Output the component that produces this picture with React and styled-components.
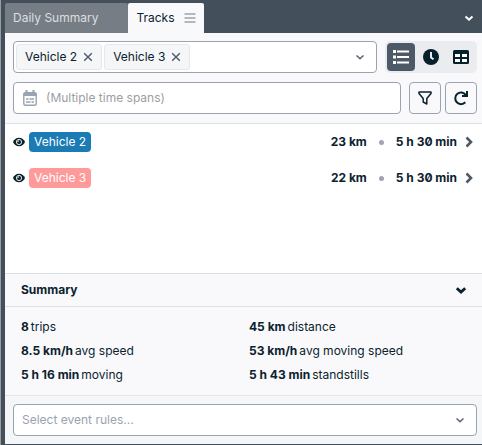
import React from 'react';
import styled, { createGlobalStyle } from 'styled-components';

const GlobalStyle = createGlobalStyle`
    *, *::before, *::after {
        box-sizing: border-box;
    }

    html, body, #root {
        height: 100%;
    }

    body {
        margin: 0;
        background-color: #444f5c;
        color: #0b222d;
        font-family: Inter, "Liberation Sans", sans-serif;
        font-size: 12px;
        line-height: 20px;
    }

    button, input {
        margin: 0;
        font: inherit;
        color: inherit;
    }

    svg {
        display: block;
        flex: none;
    }
`;

const Panel = styled.div`
    display: flex;
    flex-direction: column;
    min-height: 100%;
    border-left: 1px solid #9a9c9d;
    padding: 3px 0 1px 4px;
    background-color: #444f5c;
`;

const TabBar = styled.div`
    display: flex;
    height: 30px;
    padding-right: 8px;
`;

const Tab = styled.button`
    display: flex;
    align-items: center;
    gap: 9px;
    border: 0;
    border-radius: 2px 2px 0 0;
    padding: 0 ${({ $active }) => ($active ? '8px' : '30px')} 0 8px;
    background-color: ${({ $active }) => ($active ? '#f9f9fc' : '#777d85')};
    color: ${({ $active }) => ($active ? '#0b222d' : '#dcdfe2')};
    white-space: nowrap;
`;

const IconButton = styled.button`
    display: flex;
    align-items: center;
    justify-content: center;
    border: 0;
    padding: 0;
    background: none;
    color: ${({ $color }) => $color || '#0b222d'};
`;

const TabMenu = styled(IconButton)`
    margin-left: auto;
`;

const Filters = styled.div`
    display: flex;
    flex-direction: column;
    gap: 9px;
    border-bottom: 1px solid #dcdfe6;
    padding: 8px 5px 9px 8px;
    background-color: #f9f9fc;
`;

const FilterRow = styled.div`
    display: flex;
    gap: 8px;
`;

const Field = styled.div`
    display: flex;
    align-items: center;
    flex: 1;
    min-width: 0;
    height: 32px;
    border: 1px solid #9aa3b2;
    border-radius: 4px;
    padding: 0 11px 0 ${({ $tags }) => ($tags ? '2px' : '8px')};
    background-color: #fff;

    input {
        flex: 1;
        min-width: 0;
        border: 0;
        padding: 0;
        outline: 0;
        background: none;
    }

    input::placeholder {
        color: ${({ $muted }) => ($muted ? '#9aa3b2' : '#9c9ea2')};
        opacity: 1;
    }
`;

const Tag = styled.span`
    display: flex;
    align-items: center;
    gap: 6px;
    height: 26px;
    margin-right: 2px;
    border: 1px solid #e6e8ec;
    border-radius: 3px;
    padding: 0 8px;
    background-color: #f5f6f8;
    white-space: nowrap;
`;

const ViewSwitch = styled.div`
    display: flex;
    align-items: center;
    gap: 2px;
    border-radius: 5px;
    padding: 2px;
    background-color: #ebecf0;
`;

const ViewButton = styled(IconButton)`
    width: 28px;
    height: 28px;
    border-radius: 4px;
    background-color: ${({ $active }) => ($active ? '#4e5968' : 'transparent')};
    color: ${({ $active }) => ($active ? '#fff' : '#06202b')};
`;

const Actions = styled.div`
    display: flex;
    gap: 4px;
`;

const ActionButton = styled(IconButton)`
    width: 32px;
    height: 32px;
    border: 1px solid #9aa3b2;
    border-radius: 4px;
`;

const CalendarIcon = styled.svg`
    margin-right: 8px;
    color: #9aa3b2;
`;

const TrackList = styled.ul`
    flex: 1;
    margin: 0;
    padding: 0 9px 0 8px;
    background-color: #fff;
    list-style: none;
`;

const Track = styled.li`
    display: flex;
    align-items: center;
    height: 36px;
    font-weight: 700;
    font-variant-numeric: slashed-zero;
    white-space: nowrap;
`;

const VehicleBadge = styled.span`
    height: 20px;
    margin: 0 auto 0 4px;
    border-radius: 4px;
    padding: 0 5px;
    background-color: ${({ $color }) => $color};
    color: #fff;
    font-weight: 400;
`;

const Dot = styled.span`
    width: 5px;
    height: 5px;
    margin: 0 12px;
    border-radius: 50%;
    background-color: #a0a3b4;
`;

const OpenTrack = styled(IconButton)`
    margin-left: 8px;
`;

const SummaryHeader = styled.button`
    display: flex;
    align-items: center;
    justify-content: space-between;
    height: 34px;
    border: 0;
    border-top: 1px solid #dce0e6;
    border-bottom: 1px solid #dce0e6;
    padding: 0 15px 0 16px;
    background-color: #f9f9fc;
    font-weight: 700;
`;

const Stats = styled.ul`
    display: grid;
    grid-template-columns: 1fr 1fr;
    margin: 0;
    padding: 8px 5px 8px 16px;
    background-color: #f9f9fc;
    list-style: none;
`;

const Stat = styled.li`
    display: flex;
    gap: 2px;
    line-height: 24px;
    white-space: nowrap;
`;

const Footer = styled.div`
    border-top: 1px solid #e4e6ea;
    padding: 8px 5px 8px 8px;
    background-color: #f5f6f8;
`;

const vehicles = [
    { name: 'Vehicle 2', color: '#1a7bb5', distance: '23 km', time: '5 h 30 min' },
    { name: 'Vehicle 3', color: '#ff9a9b', distance: '22 km', time: '5 h 30 min' },
];

const stats = [
    ['8', 'trips'],
    ['45 km', 'distance'],
    ['8.5 km/h', 'avg speed'],
    ['53 km/h', 'avg moving speed'],
    ['5 h 16 min', 'moving'],
    ['5 h 43 min', 'standstills'],
];

const Chevron = ({ size = 10, weight = 2 }) => (
    <svg width={size} height={size} viewBox="0 0 10 10" fill="none" stroke="currentColor" strokeWidth={weight}>
        <path d="M1.5 3.5 5 6.7 8.5 3.5" />
    </svg>
);

const Cross = () => (
    <svg width="10" height="10" viewBox="0 0 10 10" fill="none" stroke="currentColor" strokeWidth="1.4">
        <path d="M1.2 1.2 8.8 8.8M8.8 1.2 1.2 8.8" />
    </svg>
);

const MenuLines = () => (
    <svg width="12" height="10" viewBox="0 0 12 10" stroke="#9aa3ab" strokeWidth="1.5">
        <path d="M.5 1H11.5M.5 5H11.5M.5 9H11.5" />
    </svg>
);

const Eye = () => (
    <svg width="12" height="12" viewBox="0 0 12 12">
        <path fill="currentColor" d="M6 1.8C3.2 1.8 1 3.5 0 6c1 2.5 3.2 4.2 6 4.2s5-1.7 6-4.2C11 3.5 8.8 1.8 6 1.8Z" />
        <circle cx="6" cy="6" r="2.6" fill="currentColor" stroke="#fff" strokeWidth=".9" />
        <path d="M4.7 6.1A1.3 1.3 0 0 1 6 4.8" fill="none" stroke="#fff" strokeWidth=".9" />
    </svg>
);

const App = () => {
  return (
    <>
        <GlobalStyle />
        <Panel>
            <TabBar role="tablist">
                <Tab role="tab" aria-selected="false">Daily Summary</Tab>
                <Tab role="tab" aria-selected="true" $active>
                    Tracks
                    <MenuLines />
                </Tab>
                <TabMenu aria-label="More tabs" $color="#fff"><Chevron /></TabMenu>
            </TabBar>
            <Filters>
                <FilterRow>
                    <Field $tags>
                        {vehicles.map((vehicle) => (
                            <Tag key={vehicle.name}>
                                {vehicle.name}
                                <IconButton aria-label={`Remove ${vehicle.name}`} $color="#4e5968"><Cross /></IconButton>
                            </Tag>
                        ))}
                        <input aria-label="Vehicles" />
                        <IconButton aria-label="Show vehicles" $color="#626c7a"><Chevron weight={1.6} /></IconButton>
                    </Field>
                    <ViewSwitch>
                        <ViewButton aria-label="List" $active>
                            <svg width="16" height="14" viewBox="0 0 16 14" fill="currentColor">
                                <path d="M0 0h3v3H0ZM4 .5h12v2H4ZM0 5.5h3v3H0ZM4 6h12v2H4ZM0 11h3v3H0ZM4 11.5h12v2H4Z" />
                            </svg>
                        </ViewButton>
                        <ViewButton aria-label="Timeline">
                            <svg width="16" height="16" viewBox="0 0 16 16">
                                <circle cx="8" cy="8" r="8" fill="currentColor" />
                                <path d="M8 3v5.5l2.5 1.8" fill="none" stroke="#fff" strokeWidth="1.8" />
                            </svg>
                        </ViewButton>
                        <ViewButton aria-label="Table">
                            <svg width="16" height="14" viewBox="0 0 16 14">
                                <rect width="16" height="14" rx="1.5" fill="currentColor" />
                                <path fill="#fff" d="M2 4h5v3H2ZM9 4h5v3H9ZM2 9h5v3H2ZM9 9h5v3H9Z" />
                            </svg>
                        </ViewButton>
                    </ViewSwitch>
                </FilterRow>
                <FilterRow>
                    <Field>
                        <CalendarIcon width="16" height="16" viewBox="0 0 16 16" fill="none" stroke="currentColor">
                            <rect x="1.8" y="2.8" width="12.4" height="12.4" rx="1.5" strokeWidth="1.4" />
                            <path d="M4.5 0v3M11.5 0v3" strokeWidth="2" />
                            <path d="M1.5 4.5h13" strokeWidth="3" />
                            <path d="M4 9h2.5M7.5 9H12M4 12h4.5M9.5 12H12" strokeWidth="1.4" />
                        </CalendarIcon>
                        <input aria-label="Time span" placeholder="(Multiple time spans)" />
                    </Field>
                    <Actions>
                        <ActionButton aria-label="Filter">
                            <svg width="14" height="14" viewBox="0 0 14 14" fill="none" stroke="currentColor" strokeWidth="1.5" strokeLinejoin="round">
                                <path d="M1 1h12v1.5L8.8 7.5V13L5.2 11V7.5L1 2.5Z" />
                            </svg>
                        </ActionButton>
                        <ActionButton aria-label="Refresh">
                            <svg width="16" height="16" viewBox="0 0 16 16" fill="none" stroke="currentColor" strokeWidth="2">
                                <path d="M12.8 5A5.8 5.8 0 1 0 12.3 12.3M14 1v5H9" />
                                <path d="M10.5 6 14 2.5V6Z" fill="currentColor" stroke="none" />
                            </svg>
                        </ActionButton>
                    </Actions>
                </FilterRow>
            </Filters>
            <TrackList>
                {vehicles.map((vehicle) => (
                    <Track key={vehicle.name}>
                        <IconButton aria-label={`Hide ${vehicle.name}`}><Eye /></IconButton>
                        <VehicleBadge $color={vehicle.color}>{vehicle.name}</VehicleBadge>
                        {vehicle.distance}
                        <Dot />
                        {vehicle.time}
                        <OpenTrack aria-label={`Open ${vehicle.name}`} $color="#4e5968">
                            <svg width="8" height="12" viewBox="0 0 8 12" fill="none" stroke="currentColor" strokeWidth="2.6">
                                <path d="M1.5 1.5 6 6 1.5 10.5" />
                            </svg>
                        </OpenTrack>
                    </Track>
                ))}
            </TrackList>
            <SummaryHeader aria-expanded="true">
                Summary
                <Chevron size={12} weight={2.4} />
            </SummaryHeader>
            <Stats>
                {stats.map(([value, label]) => (
                    <Stat key={label}><b>{value}</b> {label}</Stat>
                ))}
            </Stats>
            <Footer>
                <Field $muted>
                    <input aria-label="Event rules" placeholder="Select event rules..." />
                    <IconButton aria-label="Show event rules" $color="#626c7a"><Chevron weight={1.6} /></IconButton>
                </Field>
            </Footer>
        </Panel>
    </>
  )
}

export default App
